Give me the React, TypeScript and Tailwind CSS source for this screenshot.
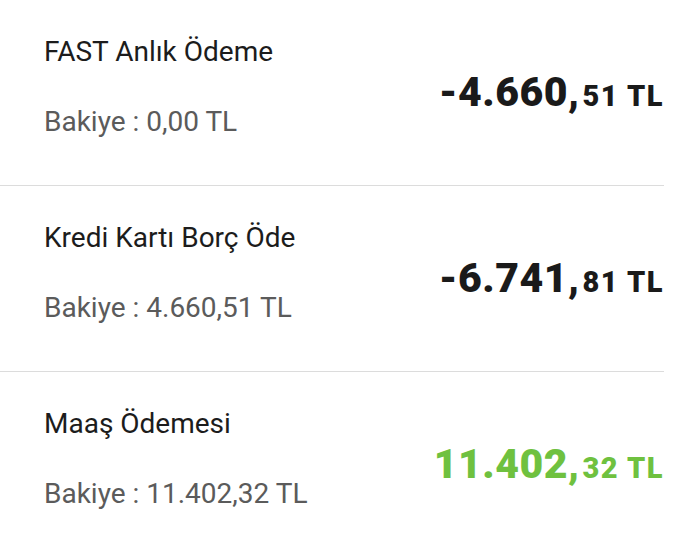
import React from "react";

const rows = [
  { title: "FAST Anlık Ödeme", bal: "Bakiye : 0,00 TL", big: "-4.660,", small: "51 TL", green: false },
  { title: "Kredi Kartı Borç Öde", bal: "Bakiye : 4.660,51 TL", big: "-6.741,", small: "81 TL", green: false },
  { title: "Maaş Ödemesi", bal: "Bakiye : 11.402,32 TL", big: "11.402,", small: "32 TL", green: true },
];

export default function App() {
  return (
    <div className="w-[690px] h-[543px] bg-white overflow-hidden" style={{ fontFamily: "Roboto, 'Noto Sans', sans-serif" }}>
      <div className="w-[664px]">
        {rows.map((r, i) => (
          <div key={i} className="flex justify-between items-start h-[186px] border-b border-[#dcdcdc] pl-[44px]">
            <div className="flex flex-col pt-[36px] gap-[38px]">
              <div className="text-[28px] leading-[32px] text-[#1c1c1c]">{r.title}</div>
              <div className="text-[28px] leading-[32px] text-[#5b5b5b]">{r.bal}</div>
            </div>
            <div className={`mt-[72px] text-[41px] font-black leading-none whitespace-nowrap ${r.green ? "text-[#6fc13f]" : "text-[#1a1a1a]"}`}>
              <span className="tracking-[0.5px]">{r.big}</span>
              <span className="text-[29px] tracking-[1.5px] pl-[3px]">{r.small}</span>
            </div>
          </div>
        ))}
      </div>
    </div>
  );
}
